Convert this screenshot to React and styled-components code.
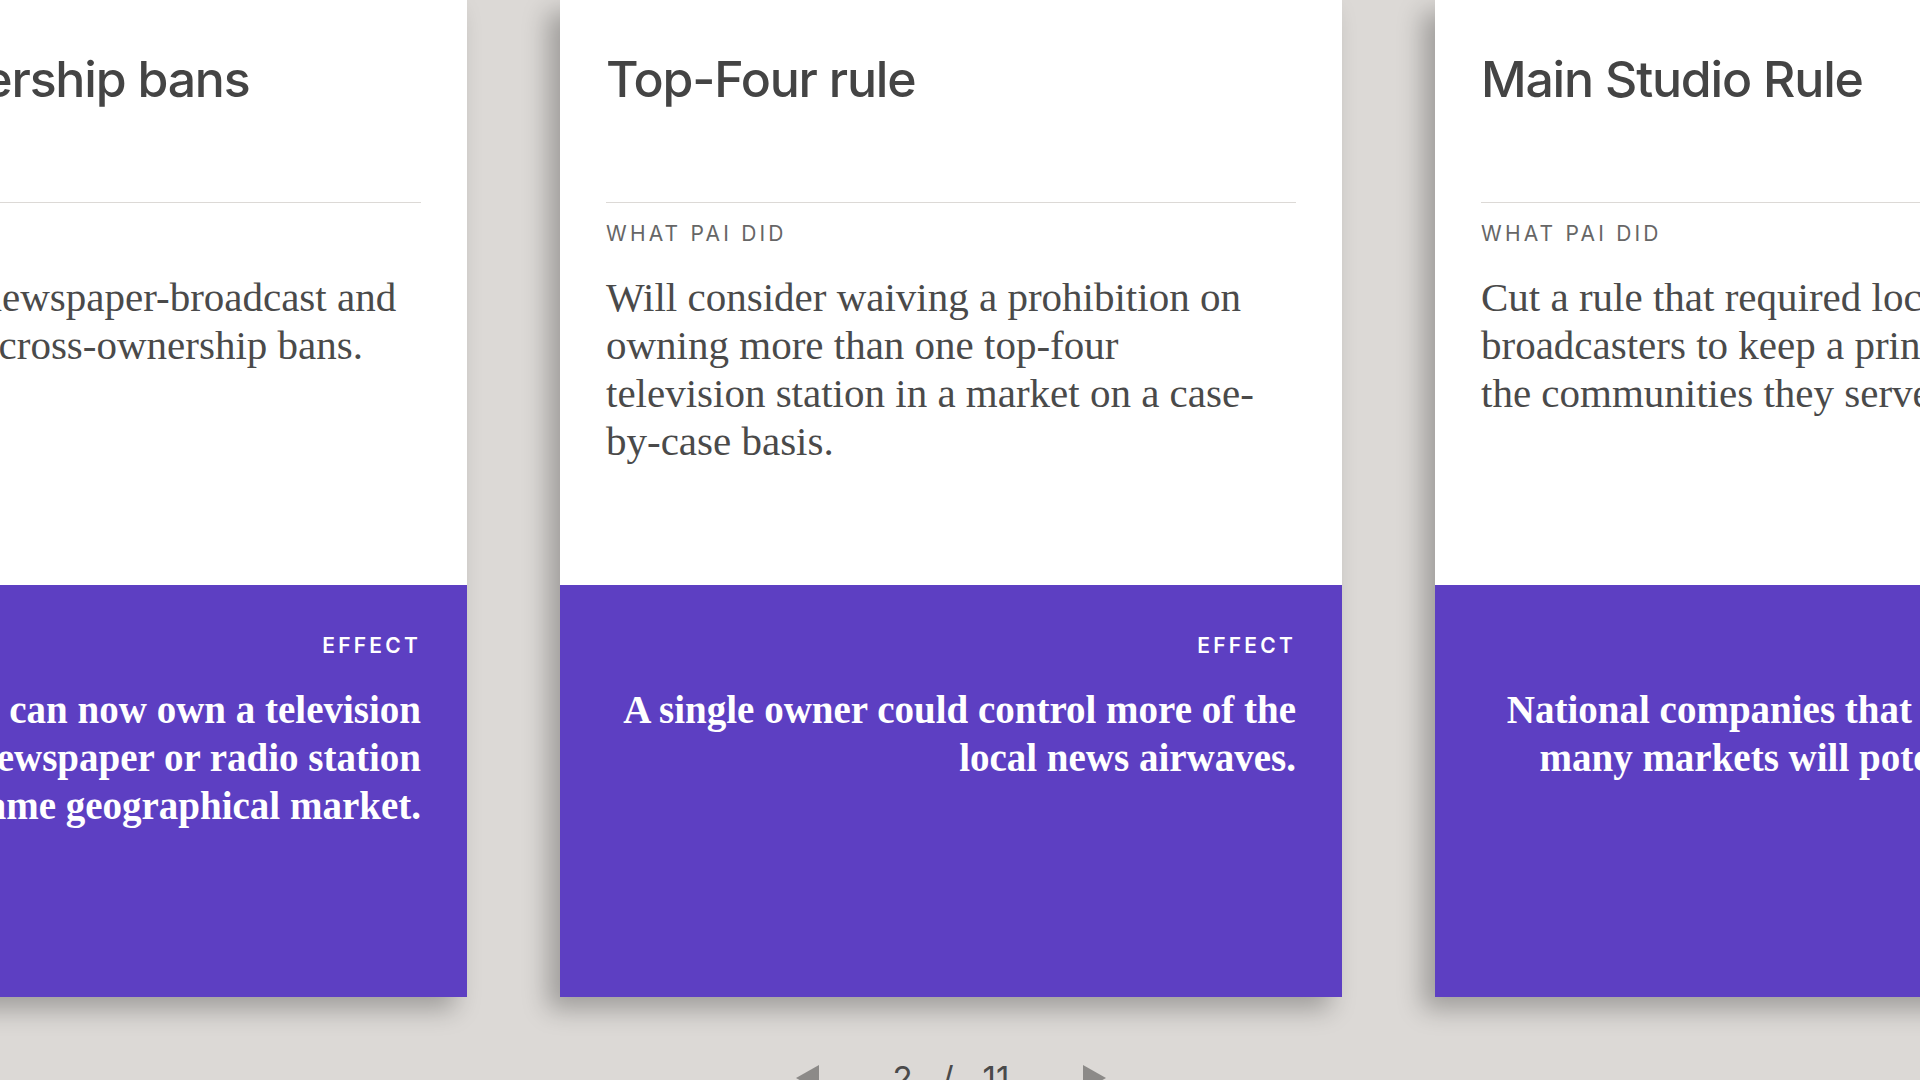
import React from 'react';
import styled, { createGlobalStyle } from 'styled-components';

const rules = [
  {
    title: 'Cross-ownership bans',
    did: 'Eliminated the newspaper-broadcast and radio-television cross-ownership bans.',
    effect:
      'Broadcasters can now own a television station and a newspaper or radio station in the same geographical market.',
  },
  {
    title: 'Top-Four rule',
    did: 'Will consider waiving a prohibition on owning more than one top-four television station in a market on a case-by-case basis.',
    effect: 'A single owner could control more of the local news airwaves.',
  },
  {
    title: 'Main Studio Rule',
    did: 'Cut a rule that required local broadcasters to keep a principal studio in the communities they serve.',
    effect:
      'National companies that own stations in many markets will potentially benefit.',
  },
];

const App = () => {
  return (
    <>
      <GlobalStyle />
      <StyledPage>
        <StyledTrack>
          {rules.map((rule) => (
            <StyledCard key={rule.title}>
              <StyledCardHead>
                <StyledTitle>{rule.title}</StyledTitle>
                <StyledDivider />
                <StyledLabel>What Pai did</StyledLabel>
                <StyledDid>{rule.did}</StyledDid>
              </StyledCardHead>
              <StyledCardEffect>
                <StyledLabel $light>Effect</StyledLabel>
                <StyledEffect>{rule.effect}</StyledEffect>
              </StyledCardEffect>
            </StyledCard>
          ))}
        </StyledTrack>
        <StyledPager>
          <StyledArrow aria-label="previous">
            <svg width="23" height="26" viewBox="0 0 23 26">
              <polygon points="23,0 23,26 0,13" fill="currentColor" />
            </svg>
          </StyledArrow>
          <StyledCounter>
            <span>2</span>
            <span>/</span>
            <span>11</span>
          </StyledCounter>
          <StyledArrow aria-label="next">
            <svg width="23" height="26" viewBox="0 0 23 26">
              <polygon points="0,0 23,13 0,26" fill="currentColor" />
            </svg>
          </StyledArrow>
        </StyledPager>
      </StyledPage>
    </>
  );
};

export default App;

const GlobalStyle = createGlobalStyle`
  html, body {
    margin: 0;
    padding: 0;
    background: #dcd9d6;
    overflow: hidden;
  }
  * {
    box-sizing: border-box;
  }
`;

const StyledPage = styled.div`
  height: 100vh;
  display: flex;
  flex-direction: column;
  overflow: hidden;
`;

// 캐러셀 위치 (가운데 카드가 살짝 왼쪽)
const StyledTrack = styled.div`
  display: flex;
  justify-content: center;
  gap: 93px;
  transform: translateX(-9px);
`;

const StyledCard = styled.div`
  flex-shrink: 0;
  width: 782px;
  height: 997px;
  display: flex;
  flex-direction: column;
  box-shadow: -12px 12px 24px rgba(0, 0, 0, 0.28);
`;

const StyledCardHead = styled.div`
  height: 585px;
  padding: 49px 46px 0;
  background: #fff;
`;

const StyledTitle = styled.h2`
  margin: 0;
  min-height: 153px;
  font-family: Inter, 'Open Sans', sans-serif;
  font-size: 50px;
  font-weight: 500;
  line-height: 60px;
  letter-spacing: -1.2px;
  color: #444;
`;

const StyledDivider = styled.hr`
  margin: 0;
  border: 0;
  height: 1px;
  background: #dcd9d6;
`;

const StyledLabel = styled.div`
  margin-top: 19px;
  font-family: Inter, 'Open Sans', sans-serif;
  font-size: 21px;
  line-height: 24px;
  font-weight: ${(props) => (props.$light ? 600 : 400)};
  letter-spacing: 3.2px;
  text-transform: uppercase;
  color: ${(props) => (props.$light ? '#fff' : '#666')};
`;

const StyledDid = styled.p`
  max-width: 676px;
  margin: 27px 0 0;
  font-family: 'Liberation Serif', 'Times New Roman', serif;
  font-size: 41px;
  line-height: 48px;
  color: #4a4a4a;
`;

const StyledCardEffect = styled.div`
  flex: 1;
  padding: 30px 46px 0;
  background: #5d3fc2;
  text-align: right;
`;

const StyledEffect = styled.p`
  margin: 28px 0 0;
  font-family: 'Liberation Serif', 'Times New Roman', serif;
  font-size: 39px;
  font-weight: 700;
  line-height: 48px;
  color: #fff;
`;

const StyledPager = styled.div`
  display: flex;
  align-items: center;
  justify-content: center;
  gap: 74px;
  margin-top: 62px;
  transform: translateX(-9px);
`;

const StyledArrow = styled.button`
  display: flex;
  padding: 0;
  border: 0;
  background: none;
  color: #8c8a88;
  cursor: pointer;
`;

const StyledCounter = styled.div`
  display: flex;
  gap: 29px;
  font-family: Inter, 'Open Sans', sans-serif;
  font-size: 33px;
  line-height: 38px;
  color: #4a4a4a;
`;
